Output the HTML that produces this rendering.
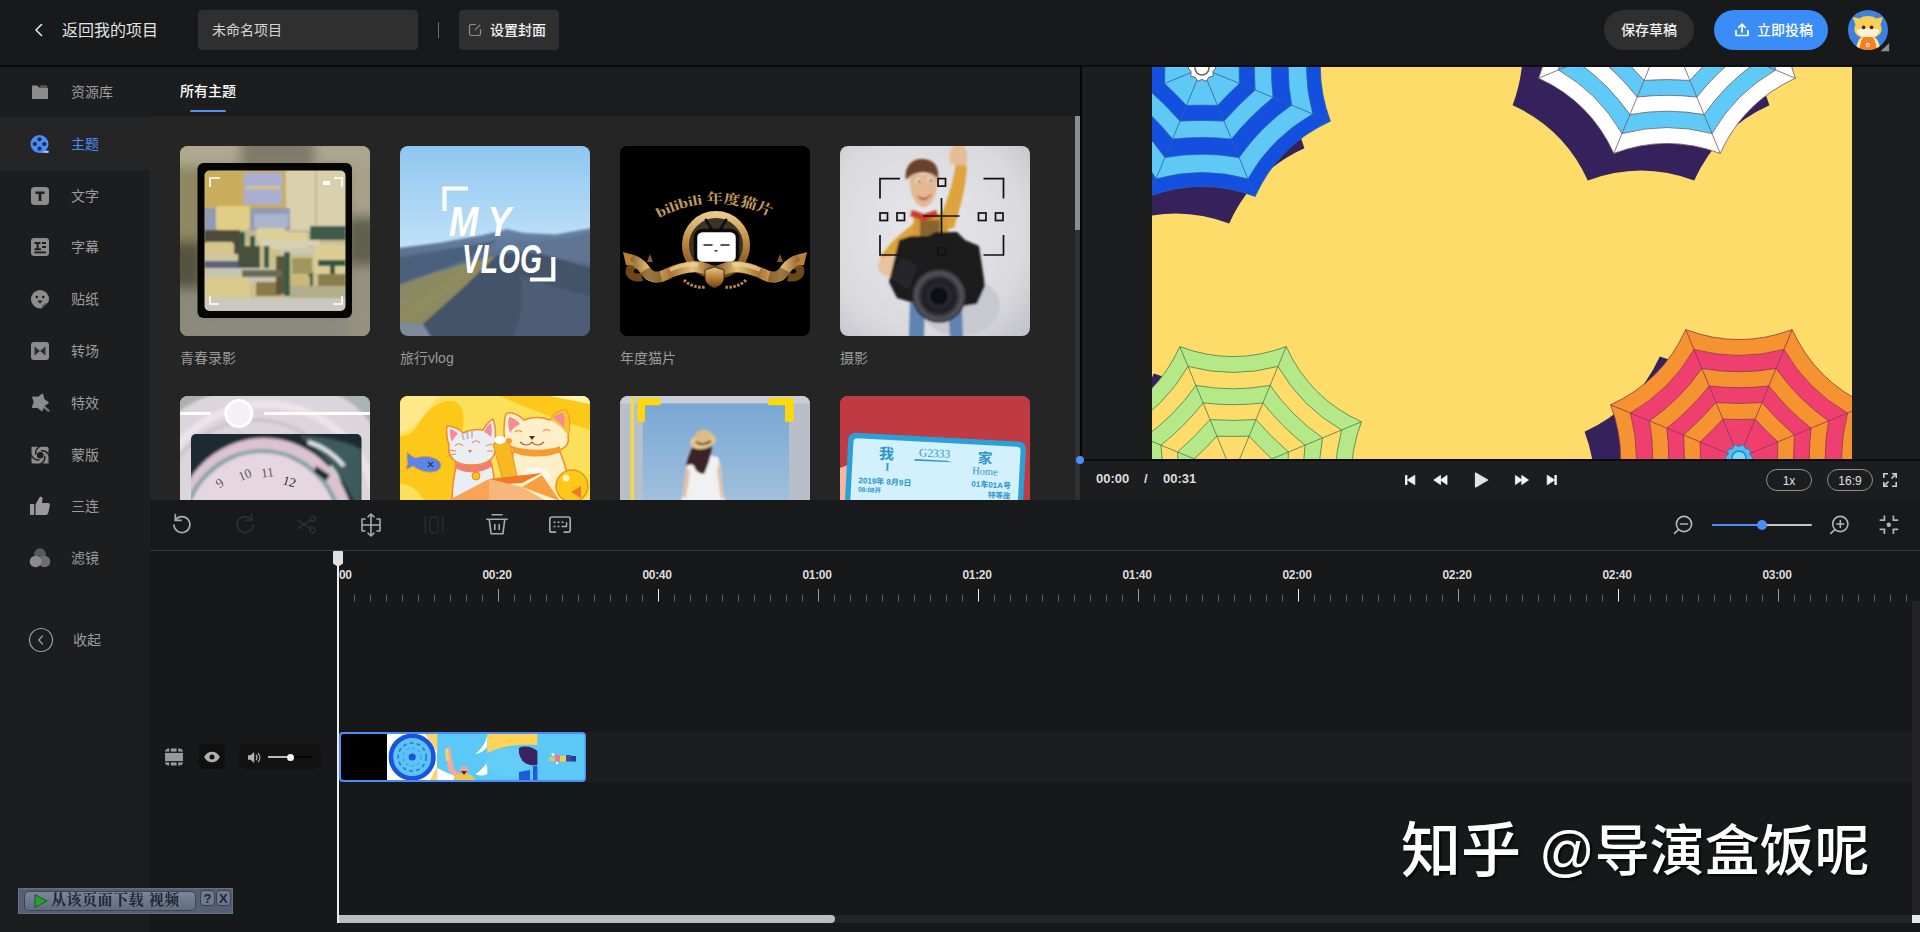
<!DOCTYPE html>
<html lang="zh-CN">
<head>
<meta charset="utf-8">
<title>视频编辑器</title>
<style>
*{box-sizing:border-box;margin:0;padding:0}
html,body{width:1920px;height:932px;overflow:hidden;background:#17181a}
body{position:relative;font-family:"Liberation Sans","Noto Sans CJK SC",sans-serif;color:#e6e6e6;font-size:14px;-webkit-font-smoothing:antialiased}
.abs{position:absolute;display:block}
.t{position:absolute;white-space:nowrap;line-height:1}
#topbar{left:0;top:0;width:1920px;height:65px;background:#18191b}
#topline{left:0;top:65px;width:1920px;height:2px;background:#0a0a0b}
#sidebar{left:0;top:67px;width:150px;height:865px;background:#1c1d1f}
#tabhead{left:150px;top:67px;width:930px;height:49px;background:#1c1d1f}
#content{left:150px;top:116px;width:930px;height:384px;background:#252525;overflow:hidden}
#activeitem{left:0;top:118px;width:150px;height:52px;background:#252525}
.nav{left:71px;font-size:14px;color:#9c9c9c}
.thumb{position:absolute;width:190px;height:190px;border-radius:8px;overflow:hidden}
.lbl{font-size:14px;color:#9a9a9a}
#preview{left:1082px;top:67px;width:839px;height:393px;background:#1c1d1f}
#pvline{left:1080px;top:66px;width:2px;height:394px;background:#060607}
#ctrl{left:1080px;top:461px;width:840px;height:39px;background:#1c1d1f}
#toolbar{left:150px;top:500px;width:1770px;height:50px;background:#18191b}
#tl{left:150px;top:551px;width:1770px;height:381px;background:#17181a}
#tlline{left:150px;top:550px;width:1770px;height:1px;background:#3a3a3c}
.rl{font-size:12px;font-weight:bold;color:#dcdcdc;top:569px;width:60px;text-align:center;letter-spacing:-.3px}
</style>
</head>
<body>

<!-- ===== top bar ===== -->
<div id="topbar" class="abs"></div>
<div id="topline" class="abs"></div>
<svg class="abs" style="left:32px;top:22px" width="14" height="16" viewBox="0 0 14 16"><path d="M9.5 2.5L4 8l5.5 5.5" fill="none" stroke="#e6e6e6" stroke-width="1.6" stroke-linecap="round" stroke-linejoin="round"/></svg>
<div class="t" style="left:62px;top:23px;font-size:16px;color:#e2e2e2">返回我的项目</div>
<div class="abs" style="left:198px;top:10px;width:220px;height:40px;border-radius:4px;background:#2f2f30"></div>
<div class="t" style="left:212px;top:23px;font-size:14px;color:#d4d4d4">未命名项目</div>
<div class="abs" style="left:438px;top:22px;width:1px;height:16px;background:#6a6a6a"></div>
<div class="abs" style="left:459px;top:10px;width:100px;height:40px;border-radius:4px;background:#2f2f30"></div>
<svg class="abs" style="left:468px;top:23px" width="14" height="14" viewBox="0 0 14 14"><path d="M7.5 1.5H3.2A1.7 1.7 0 0 0 1.5 3.2v7.6a1.7 1.7 0 0 0 1.7 1.7h7.6a1.7 1.7 0 0 0 1.7-1.7V6.5" fill="none" stroke="#8e8e8e" stroke-width="1.2" stroke-linecap="round"/><path d="M7.2 6.8L11.8 2.2" stroke="#8e8e8e" stroke-width="1.2" stroke-linecap="round"/></svg>
<div class="t" style="left:490px;top:23px;font-size:14px;font-weight:500;color:#f2f2f2">设置封面</div>

<div class="abs" style="left:1604px;top:10px;width:90px;height:40px;border-radius:20px;background:#2f2f30"></div>
<div class="t" style="left:1621px;top:23px;font-size:14px;font-weight:500;color:#f2f2f2">保存草稿</div>
<div class="abs" style="left:1714px;top:10px;width:114px;height:40px;border-radius:20px;background:#3a8cf6"></div>
<svg class="abs" style="left:1734px;top:22px" width="16" height="16" viewBox="0 0 16 16"><path d="M2 8.5v4.3c0 .4.3.7.7.7h10.6c.4 0 .7-.3.7-.7V8.5" fill="none" stroke="#fff" stroke-width="1.7" stroke-linecap="round"/><path d="M8 10V2.3M4.8 5.3L8 2.1l3.2 3.2" fill="none" stroke="#fff" stroke-width="1.7" stroke-linecap="round" stroke-linejoin="round"/></svg>
<div class="t" style="left:1757px;top:23px;font-size:14px;font-weight:500;color:#fff">立即投稿</div>
<!-- avatar -->
<svg class="abs" style="left:1848px;top:9.700px" width="42" height="42" viewBox="0 0 42 42">
<defs><clipPath id="avc"><circle cx="20" cy="20" r="20"/></clipPath><filter id="avb"><feGaussianBlur stdDeviation=".5"/></filter></defs>
<circle cx="20" cy="20" r="20" fill="#3b82e0"/>
<g clip-path="url(#avc)"><g filter="url(#avb)">
<path d="M4.500 7l7 1.500c3-2 6-2.600 8.500-2.600s5.500.6 8.500 2.600l6.500-1.500-2.500 7.500c1 2 1.200 4 1 6-1 5-6 7.500-13.500 7.500S7.500 25.500 6.500 20.500c-.2-2 0-4 1-6z" fill="#f8d055"/>
<path d="M8.700 20c3-1.200 7-1.800 11.300-1.800s8.300.6 11.300 1.800c-.5 4.800-5 7.300-11.300 7.300S9.200 24.800 8.700 20z" fill="#fdf1da"/>
<circle cx="15.600" cy="17.400" r="1.800" fill="#4a1f1a"/><circle cx="23.600" cy="17.400" r="1.800" fill="#4a1f1a"/>
<path d="M8 42c0-8 3-14 6-15h12c3 1 6.400 7 6.400 15z" fill="#fbe39a"/>
<path d="M11.500 42c0-7 2-13 4-15h9c2 2 4 8 4 15z" fill="#f57f20"/>
<circle cx="19.800" cy="35" r="2.200" fill="#fbd9a8"/><circle cx="19.800" cy="35.300" r=".9" fill="#f57f20"/>
</g></g>
<path d="M41.200 33v8.200H32.500z" fill="#8c8c92"/>
</svg>

<!-- ===== sidebar ===== -->
<div id="sidebar" class="abs"></div>
<div id="tabhead" class="abs"></div>
<div id="activeitem" class="abs"></div>
<!-- folder -->
<svg class="abs" style="left:30px;top:82px" width="20" height="20" viewBox="0 0 20 20"><path d="M2 3.5h5.2l1.8 2H17a1 1 0 0 1 1 1V16a1 1 0 0 1-1 1H3a1 1 0 0 1-1-1z" fill="#8c8c8c"/><path d="M9.5 3.6h7.5v1.2H10.6z" fill="#6e6e6e"/></svg>
<div class="t nav" style="top:85px">资源库</div>
<!-- film reel (active) -->
<svg class="abs" style="left:29px;top:133px" width="22" height="22" viewBox="0 0 22 22"><circle cx="10.5" cy="11" r="9" fill="#4a8df8"/><circle cx="10.5" cy="6.3" r="2.1" fill="#1d2a44"/><circle cx="10.5" cy="15.7" r="2.1" fill="#1d2a44"/><circle cx="5.8" cy="11" r="2.1" fill="#1d2a44"/><circle cx="15.2" cy="11" r="2.1" fill="#1d2a44"/><rect x="10.5" y="17.6" width="9.5" height="2.4" rx="1.2" fill="#4a8df8"/><rect x="14.5" y="18.2" width="5" height="1.2" rx=".6" fill="#dfe9ff"/></svg>
<div class="t nav" style="top:137px;color:#4a8df8">主题</div>
<!-- text T -->
<svg class="abs" style="left:30px;top:186px" width="20" height="20" viewBox="0 0 20 20"><rect x="1" y="1" width="18" height="18" rx="3.5" fill="#8c8c8c"/><path d="M5.5 5.5h9v2.6h-3.1V15H8.6V8.1H5.5z" fill="#1c1d1f"/></svg>
<div class="t nav" style="top:189px">文字</div>
<!-- subtitle -->
<svg class="abs" style="left:30px;top:237px" width="20" height="20" viewBox="0 0 20 20"><rect x="1" y="1" width="18" height="18" rx="3" fill="#8c8c8c"/><path d="M4.5 5h6v2H8.6v4.2h2.4v2H4.5v-2h2.1V7H4.500z" fill="#1c1d1f"/><rect x="12" y="5" width="4" height="2" fill="#1c1d1f"/><rect x="12" y="9" width="4" height="2" fill="#1c1d1f"/><rect x="4.500" y="14.500" width="11.500" height="1.800" fill="#1c1d1f"/></svg>
<div class="t nav" style="top:240px">字幕</div>
<!-- sticker -->
<svg class="abs" style="left:30px;top:289px" width="20" height="20" viewBox="0 0 20 20"><path d="M10 1a9 9 0 0 1 9 9c0 1.500-.5 2.800-1.200 3.800L11.500 19.500C6 20 1 15.500 1 10a9 9 0 0 1 9-9z" fill="#8c8c8c"/><path d="M11.300 19.300c.3-3.200 2.800-5.400 6.400-5.600z" fill="#5a5a5a"/><circle cx="6.800" cy="8" r="1.300" fill="#1c1d1f"/><circle cx="13.200" cy="8" r="1.300" fill="#1c1d1f"/><path d="M7.500 11.500h5l-2.500 3.200z" fill="#1c1d1f"/></svg>
<div class="t nav" style="top:292px">贴纸</div>
<!-- transition -->
<svg class="abs" style="left:30px;top:341px" width="20" height="20" viewBox="0 0 20 20"><rect x="1" y="1" width="18" height="18" rx="3" fill="#8c8c8c"/><path d="M4.500 5.500L10 10l-5.500 4.500zM15.500 5.500L10 10l5.500 4.500z" fill="#2c2c2e"/></svg>
<div class="t nav" style="top:344px">转场</div>
<!-- effects star -->
<svg class="abs" style="left:30px;top:393px" width="22" height="22" viewBox="0 0 22 22"><path d="M13 13l5.400 4.600" stroke="#777" stroke-width="2.400" stroke-linecap="round"/><polygon points="12.5,1.5 13.7,6.6 18.0,9.7 13.5,12.5 11.9,17.5 7.9,14.1 2.6,14.1 4.6,9.2 3.0,4.2 8.2,4.6" fill="#8c8c8c" stroke="#8c8c8c" stroke-width="1.600" stroke-linejoin="round"/></svg>
<div class="t nav" style="top:396px">特效</div>
<!-- mask swirl -->
<svg class="abs" style="left:30px;top:445px" width="20" height="20" viewBox="0 0 20 20"><path d="M1.500 1.800h15.500a1.500 1.500 0 0 1 1.500 1.500v15.200H3a1.500 1.500 0 0 1-1.500-1.500z" fill="#8c8c8c"/><circle cx="10.200" cy="10.300" r="3.300" fill="#1c1d1f"/><g fill="none" stroke="#1c1d1f" stroke-width="1.500" stroke-linecap="round"><path d="M10.500 1.200Q5.200 3.800 5.600 9"/><path d="M19.200 10.600Q16.600 5.300 11.400 5.700"/><path d="M9.900 19.400Q15.200 16.800 14.800 11.600"/><path d="M1.200 10Q3.800 15.300 9 14.900"/></g></svg>
<div class="t nav" style="top:448px">蒙版</div>
<!-- thumbs up -->
<svg class="abs" style="left:29px;top:495px" width="22" height="22" viewBox="0 0 22 22"><rect x="1" y="9" width="4.200" height="11" rx="1" fill="#9a9a9a"/><path d="M6.500 9.500L11 1.500c1.800 0 2.800 1.200 2.500 2.900L12.900 8H19c1.300 0 2.200 1.200 1.900 2.500l-1.700 7.600c-.3 1.100-1.200 1.900-2.400 1.900H6.500z" fill="#9a9a9a"/></svg>
<div class="t nav" style="top:499px">三连</div>
<!-- filter circles -->
<svg class="abs" style="left:28px;top:547px" width="24" height="22" viewBox="0 0 24 22"><circle cx="12" cy="7" r="5.800" fill="#5a5a5a"/><circle cx="16.500" cy="14.500" r="5.800" fill="#6e6e6e"/><circle cx="7.500" cy="14.500" r="5.800" fill="#8c8c8c"/></svg>
<div class="t nav" style="top:551px">滤镜</div>
<!-- collapse -->
<svg class="abs" style="left:28px;top:627px" width="26" height="26" viewBox="0 0 26 26"><circle cx="13" cy="13" r="11.500" fill="none" stroke="#9c9c9c" stroke-width="1.200"/><path d="M14.500 9L10.800 13l3.700 4" fill="none" stroke="#9c9c9c" stroke-width="1.300" stroke-linecap="round" stroke-linejoin="round"/></svg>
<div class="t nav" style="left:73px;top:633px">收起</div>
<!-- tab header -->
<div class="t" style="left:180px;top:84px;font-size:14px;font-weight:500;color:#fff">所有主题</div>
<div class="abs" style="left:190px;top:110px;width:36px;height:2px;background:#5a8ff0;border-radius:1px"></div>

<!-- ===== content / thumbnails ===== -->
<div id="content" class="abs">
<!-- thumb 1 : classroom -->
<div class="thumb" style="left:30px;top:30px;background:#9a9273">
<svg width="190" height="190" viewBox="0 0 190 190">
<defs><filter id="b1" x="-20%" y="-20%" width="140%" height="140%"><feGaussianBlur stdDeviation="6"/></filter>
<filter id="b1s" x="-20%" y="-20%" width="140%" height="140%"><feGaussianBlur stdDeviation="1.2"/></filter>
<clipPath id="c1"><rect x="24.5" y="24.5" width="141" height="140.5" rx="5"/></clipPath></defs>
<rect width="190" height="190" fill="#8a846c"/>
<g filter="url(#b1)">
<rect x="-10" y="-10" width="75" height="30" fill="#b0a98f"/>
<rect x="60" y="-10" width="80" height="30" fill="#7f7a69"/>
<rect x="135" y="-10" width="65" height="30" fill="#ada68e"/>
<rect x="-10" y="20" width="30" height="75" fill="#8f8760"/>
<rect x="-10" y="95" width="32" height="48" fill="#55523f"/>
<rect x="-10" y="143" width="32" height="50" fill="#8c8a7a"/>
<rect x="15" y="168" width="165" height="30" fill="#8b8a7f"/>
<rect x="168" y="18" width="30" height="52" fill="#a8a188"/>
<rect x="168" y="70" width="30" height="50" fill="#615e4e"/>
<rect x="168" y="120" width="30" height="75" fill="#96927e"/>
</g>
<rect x="17.5" y="17" width="154.500" height="155" rx="6" fill="#050505"/>
<g clip-path="url(#c1)"><g filter="url(#b1s)">
<rect x="20" y="20" width="150" height="150" fill="#cbbf8c"/>
<rect x="24" y="24" width="82" height="52" fill="#c9ad5d"/>
<rect x="106" y="24" width="60" height="70" fill="#d9d1ae"/>
<rect x="135" y="24" width="1.500" height="66" fill="#b9b08c"/>
<rect x="64" y="27" width="38" height="31" fill="#a9aed2"/>
<rect x="66" y="40" width="34" height="3" fill="#d9c66a"/>
<rect x="24" y="62" width="86" height="24" fill="#8f9bb2"/>
<rect x="36" y="60" width="34" height="24" rx="3" fill="#e0cd86"/>
<rect x="74" y="68" width="34" height="14" fill="#aab4cc"/>
<rect x="24" y="84" width="142" height="12" fill="#bfb791"/>
<rect x="24" y="84" width="36" height="30" fill="#4d4a3c"/>
<rect x="130" y="80" width="36" height="14" fill="#3d5a4c"/>
<rect x="76" y="82" width="30" height="14" rx="4" fill="#dccf9a"/>
<rect x="90" y="86" width="38" height="18" rx="4" fill="#dccf9a"/>
<rect x="60" y="86" width="5" height="32" fill="#2f5a45"/>
<rect x="70" y="90" width="5" height="30" fill="#2f5a45"/>
<rect x="84" y="96" width="5" height="34" fill="#2f5a45"/>
<rect x="80" y="94" width="60" height="6" fill="#d6d0b6"/>
<rect x="100" y="102" width="40" height="6" fill="#c9c8ba"/>
<rect x="104" y="106" width="6" height="44" fill="#315c48"/>
<rect x="134" y="98" width="32" height="30" rx="5" fill="#d9cc94"/>
<rect x="138" y="114" width="28" height="6" fill="#2d5442"/>
<rect x="150" y="118" width="5" height="46" fill="#2d5442"/>
<rect x="128" y="126" width="5" height="36" fill="#2d5442"/>
<rect x="24" y="96" width="30" height="14" rx="3" fill="#d4c68c"/>
<rect x="24" y="108" width="38" height="10" fill="#cfc6a0"/>
<rect x="24" y="115" width="34" height="8" fill="#59617a"/>
<rect x="24" y="122" width="70" height="16" fill="#c6c5b4"/>
<rect x="24" y="130" width="46" height="26" rx="6" fill="#d8c98d"/>
<rect x="76" y="136" width="26" height="14" fill="#8c7a4a"/>
<rect x="110" y="130" width="20" height="20" fill="#c9b878"/>
<rect x="58" y="100" width="22" height="22" fill="#46503e"/>
<rect x="96" y="110" width="9" height="38" fill="#5d553a"/>
<rect x="112" y="112" width="20" height="16" fill="#a3955f"/>
<rect x="62" y="124" width="40" height="7" fill="#6b6b58"/>
<rect x="138" y="128" width="28" height="20" fill="#8a7d4e"/>
<rect x="24" y="152" width="142" height="14" fill="#c9c9c0"/>
<rect x="110" y="140" width="56" height="12" fill="#b3ad8c"/>
</g>
<path d="M30 41v-9h10M154 32h8v9M30 150v8h9M162 150v8h-9" fill="none" stroke="#fff" stroke-width="1.600"/>
<rect x="143" y="35" width="7" height="4" fill="#fff"/>
</g>
</svg></div>
<div class="t lbl" style="left:30px;top:235px">青春录影</div>

<!-- thumb 2 : vlog -->
<div class="thumb" style="left:250px;top:30px">
<svg width="190" height="190" viewBox="0 0 190 190">
<defs><linearGradient id="sky" x1="0" y1="0" x2="0" y2="1"><stop offset="0" stop-color="#8fc6f0"/><stop offset="1" stop-color="#c3e3f8"/></linearGradient>
<linearGradient id="mt" x1="0" y1="0" x2="0" y2="1"><stop offset="0" stop-color="#6a84a6"/><stop offset=".35" stop-color="#55698a"/><stop offset="1" stop-color="#45556b"/></linearGradient>
<linearGradient id="lit" x1="0" y1="0" x2="1" y2="1"><stop offset="0" stop-color="#7d8670"/><stop offset=".5" stop-color="#8f8c5e"/><stop offset="1" stop-color="#7a7a5c"/></linearGradient>
<filter id="b2"><feGaussianBlur stdDeviation=".9"/></filter></defs>
<rect width="190" height="108" fill="url(#sky)"/>
<g filter="url(#b2)">
<path d="M-2 102L38 97 81 89.500 100 85l6.700-2 8.300 2 9 2 32 1.400L192 82V192H-2z" fill="url(#mt)"/>
<path d="M-2 112c20-4 45-8 70-12l30-6c-10 8-24 14-34 20-22 8-44 16-66 26z" fill="#4b607d"/>
<path d="M110 96c14 0 30 0 46-2 12-2 24-6 36-8v30c-20 0-50-4-82-20z" fill="#5f7592"/>
<path d="M-2 139L30 128l36-11 30-7c-6 6-12 12-18 17-8 8-16 16-24 24-10 9-20 18-30 27l-26-2z" fill="url(#lit)"/>
<path d="M-2 176l25 2 9 14H-2z" fill="#7d8b9b"/>
<path d="M96 110c14-4 30-4 44-2 18 4 36 10 52 14v70H32l-9-14c10-9 20-18 30-27 16-14 30-28 43-41z" fill="#43536a"/>
<path d="M120 130c20 6 44 14 72 20v42h-80c10-20 12-40 8-62z" fill="#4d5d74"/>
</g>
<path d="M44.500 65V42.500H68" fill="none" stroke="#fff" stroke-width="4.200"/>
<path d="M130 133.500h23.300V111" fill="none" stroke="#fff" stroke-width="4.200"/>
<text x="49" y="89.500" font-family="Liberation Sans,sans-serif" font-style="italic" font-weight="bold" font-size="43" fill="#fff" textLength="62" lengthAdjust="spacingAndGlyphs">M Y</text>
<text x="62" y="126.500" font-family="Liberation Sans,sans-serif" font-style="italic" font-weight="bold" font-size="41" fill="#fff" textLength="80" lengthAdjust="spacingAndGlyphs">VLOG</text>
</svg></div>
<div class="t lbl" style="left:250px;top:235px">旅行vlog</div>

<!-- thumb 3 : bilibili cat -->
<div class="thumb" style="left:470px;top:30px;background:#000">
<svg width="190" height="190" viewBox="0 0 190 190">
<defs><linearGradient id="gold" x1="0" y1="0" x2="0" y2="1"><stop offset="0" stop-color="#e9c88a"/><stop offset=".5" stop-color="#b9803a"/><stop offset="1" stop-color="#6e4618"/></linearGradient>
<linearGradient id="gold2" x1="0" y1="0" x2="1" y2="0"><stop offset="0" stop-color="#7a4e1c"/><stop offset=".25" stop-color="#e6c27c"/><stop offset=".5" stop-color="#a8742f"/><stop offset=".75" stop-color="#e6c27c"/><stop offset="1" stop-color="#7a4e1c"/></linearGradient>
<path id="arc3" d="M39 72Q96 42 155 73"/></defs>
<rect width="190" height="190" fill="#000"/>
<text font-family="Liberation Serif,Noto Serif CJK SC,serif" font-weight="bold" font-size="14" fill="#c09a5e"><textPath href="#arc3" textLength="116" lengthAdjust="spacingAndGlyphs">bilibili 年度猫片</textPath></text>
<circle cx="96" cy="99" r="30.500" fill="#3a3326" stroke="url(#gold)" stroke-width="7"/>
<path d="M86 74l6 10M106 74l-6 10" stroke="#111" stroke-width="3" stroke-linecap="round"/>
<rect x="75.500" y="84.500" width="42" height="33" rx="7" fill="#fff" stroke="#0a0a0a" stroke-width="3.500"/>
<path d="M84 99h8M101 99h8" stroke="#222" stroke-width="1.600" stroke-linecap="round"/><rect x="94.500" y="104" width="3" height="1.500" fill="#333"/>
<g fill="none" stroke-linecap="butt">
<path d="M22 131c-8 2-14-2-12-8 2-5 10-5 16-1" stroke="#6e4618" stroke-width="8"/>
<path d="M168 131c8 2 14-2 12-8-2-5-10-5-16-1" stroke="#6e4618" stroke-width="8"/>
<path d="M7 113c8 1 14 5 18 11 4 7 12 9 20 5 10-5 22-9 34-8 6 1 11 3 16 6" stroke="url(#gold2)" stroke-width="11"/>
<path d="M183 113c-8 1-14 5-18 11-4 7-12 9-20 5-10-5-22-9-34-8-6 1-11 3-16 6" stroke="url(#gold2)" stroke-width="11"/>
<path d="M25 124c3 5 9 8 16 6" stroke="#5f3b12" stroke-width="11" opacity=".55"/>
<path d="M165 124c-3 5-9 8-16 6" stroke="#5f3b12" stroke-width="11" opacity=".55"/>
<path d="M50 124c8-4 18-6 28-5" stroke="#f0d49a" stroke-width="4" opacity=".7"/>
<path d="M140 124c-8-4-18-6-28-5" stroke="#f0d49a" stroke-width="4" opacity=".7"/>
</g>
<path d="M3 106l10 3-3 5 6 5-10 0z" fill="#b9803a"/><path d="M187 106l-10 3 3 5-6 5 10 0z" fill="#b9803a"/>
<path d="M30 108l3 8h-6zM160 108l3 8h-6z" fill="#8a5a20"/>
<path d="M85 124l9.500-3 9.500 3v8c0 5-4 8-9.500 10-5.500-2-9.500-5-9.500-10z" fill="url(#gold)" stroke="#2a1a08" stroke-width=".8"/>
<path d="M64 134c6 6 14 8 22 7M126 134c-6 6-14 8-22 7" stroke="#b98a44" stroke-width="3" fill="none" stroke-dasharray="2.500 1.500"/>
</svg></div>
<div class="t lbl" style="left:470px;top:235px">年度猫片</div>

<!-- thumb 4 : woody camera -->
<div class="thumb" style="left:690px;top:30px">
<svg width="190" height="190" viewBox="0 0 190 190">
<defs><radialGradient id="bg4" cx=".45" cy=".45" r=".75"><stop offset="0" stop-color="#e8e8ec"/><stop offset=".7" stop-color="#dadade"/><stop offset="1" stop-color="#c2c2ca"/></radialGradient>
<filter id="b4"><feGaussianBlur stdDeviation="1"/></filter>
<radialGradient id="lens" cx=".5" cy=".5" r=".5"><stop offset="0" stop-color="#15151a"/><stop offset=".35" stop-color="#2c2c33"/><stop offset=".6" stop-color="#1d1d22"/><stop offset=".85" stop-color="#55555c"/><stop offset="1" stop-color="#2a2a30"/></radialGradient></defs>
<rect width="190" height="190" fill="url(#bg4)"/>
<g filter="url(#b4)">
<ellipse cx="120" cy="160" rx="40" ry="30" fill="#c8c8d0"/>
<!-- legs -->
<path d="M70 152l15 4-1 36H69z" fill="#5f84b4"/><path d="M108 160l14 0 1 32h-13z" fill="#5f84b4"/>
<!-- raised arm -->
<path d="M100 84l14-2c6-20 12-40 13-62l-11-3c-3 20-9 40-18 58z" fill="#dfa33a"/>
<path d="M110 18c-2-8 0-16 6-20l8 2c4 6 4 14 2 20z" fill="#e6bd98"/>
<!-- left arm -->
<path d="M76 76l10 10c-12 10-26 20-34 32l-12-6c8-14 22-26 36-36z" fill="#dfa33a"/>
<ellipse cx="52" cy="120" rx="14" ry="11" fill="#e8c49e"/>
<!-- torso -->
<path d="M74 68h32l4 30H72z" fill="#d49a35"/>
<path d="M80 74h20v20H80z" fill="#4a3a2a" opacity=".55"/>
<!-- head -->
<path d="M69.500 28c0 20 4 31 14 33 10-1 14-13 14-33z" fill="#e4b793"/>
<path d="M66 34c-2-14 6-21 16-21 10 0 18 6 16 20-6-8-22-10-32 1z" fill="#6b4229"/>
<ellipse cx="78.500" cy="35" rx="2.300" ry="2.800" fill="#f4efe8"/><ellipse cx="90" cy="34" rx="2.300" ry="2.800" fill="#f4efe8"/><circle cx="79" cy="35.500" r="1.300" fill="#2a1a10"/><circle cx="90.500" cy="34.500" r="1.300" fill="#2a1a10"/>
<path d="M78 50c4 4 10 3 13-2-3 6-10 8-13 2z" fill="#a03a30" stroke="#a03a30"/>
<path d="M72 64l12 4 12-4 2 6-14 5-14-5z" fill="#cf3a2a"/>
<!-- camera --><g transform="translate(1 4)">
<path d="M58 90l12-4h18l6-4h22l8 8 14 6 6 40-8 18-40 6-40-12-8-16z" fill="#1b1b1f"/>
<path d="M50 128l10-20 16 6-8 26z" fill="#26262b"/>
<circle cx="98" cy="146" r="27" fill="url(#lens)"/>
<circle cx="98" cy="146" r="9" fill="#0e0e12"/></g>
</g>
<g fill="none" stroke="#111" stroke-width="1.700">
<path d="M40 52.600V32.600H60M143.500 32.600h20v20M40 89v20h20M143.500 109h20V89"/>
<rect x="40" y="67" width="7.500" height="7.500"/><rect x="57" y="67" width="7.500" height="7.500"/><rect x="138.500" y="67" width="7.500" height="7.500"/><rect x="155.500" y="67" width="7.500" height="7.500"/>
<rect x="98" y="32.600" width="7.500" height="7.500"/><rect x="98" y="101.500" width="7.500" height="7.500"/>
<path d="M101.500 52v38.500M83 70h36.500"/>
</g>
</svg></div>
<div class="t lbl" style="left:690px;top:235px">摄影</div>

<!-- thumb 5 : pocket watch -->
<div class="thumb" style="left:30px;top:280px">
<svg width="190" height="190" viewBox="0 0 190 190">
<defs><filter id="b5" x="-10%" y="-10%" width="120%" height="120%"><feGaussianBlur stdDeviation="1.500"/></filter>
<clipPath id="c5"><rect x="11" y="38" width="170.500" height="160" rx="5"/></clipPath></defs>
<rect width="190" height="190" fill="#dcd5dc"/>
<g filter="url(#b5)">
<path d="M-5 -5h50c-20 5-35 12-48 22z" fill="#aab0b0"/>
<path d="M150 -5h45v40c-8-16-22-30-45-40z" fill="#a9b4b3"/>
<ellipse cx="85" cy="120" rx="112" ry="112" fill="none" stroke="#ece4ea" stroke-width="8"/>
<ellipse cx="75" cy="130" rx="100" ry="106" fill="none" stroke="#c9c0c8" stroke-width="3"/>
</g>
<g clip-path="url(#c5)"><g filter="url(#b5)">
<rect x="5" y="32" width="185" height="165" fill="#1f2c30"/>
<path d="M120 40c20 0 45 4 62 14v70c-10-30-30-60-62-84z" fill="#3c5a5c"/>
<path d="M128 46c14 4 26 12 36 24" stroke="#dfe8e8" stroke-width="4" fill="none"/>
<path d="M150 70c10 10 14 26 8 44" stroke="#cfdada" stroke-width="3" fill="none"/>
<ellipse cx="84" cy="136" rx="90" ry="94" fill="#dcc3cf"/>
<ellipse cx="82" cy="139" rx="82" ry="86" fill="#7fa3a2"/>
<ellipse cx="82" cy="141" rx="78" ry="84" fill="#e6d6e0"/>
<path d="M136 70l14 9-4 6-12-9z" fill="#1a2020"/>
</g>
<g font-family="Liberation Serif,serif" fill="#5a5560" font-size="13">
<text x="36" y="91" transform="rotate(-35 40 86)">9</text>
<text x="58" y="83" transform="rotate(-22 65 78)">10</text>
<text x="81" y="81" transform="rotate(-8 87 76)">11</text>
<text x="103" y="90" transform="rotate(16 110 85)" fill="#2a2a30">12</text>
</g></g>
<rect x="0" y="16" width="31" height="3" fill="#fff"/><rect x="84" y="16" width="106" height="3" fill="#fff"/>
<circle cx="58.800" cy="17.600" r="13" fill="#f4f0f4" stroke="#fff" stroke-width="3"/>
</svg></div>

<!-- thumb 6 : lucky cats -->
<div class="thumb" style="left:250px;top:280px">
<svg width="190" height="190" viewBox="0 0 190 190">
<rect width="190" height="190" fill="#fde05a"/>
<path d="M0 40c14 0 16-10 24-20 8-10 20-18 32-14 10 6 8 20 6 34-2 20-10 40-8 64H0z" fill="#fdc81a"/>
<path d="M0 0h40c-10 8-16 22-26 30-4 4-10 6-14 6z" fill="#fee889"/>
<path d="M0 88c10 0 18 6 24 16H0z" fill="#fde05a"/>
<path d="M100 0h90v34c-30-10-60-20-90-34z" fill="#fdc81a"/>
<path d="M150 0h40v8z" fill="#fff3b0"/>
<!-- blue fish -->
<path d="M7 56c3 3 6 5 9 6 8-3 18-2 24 4 2 3 1 7-3 9-8 3-18 0-24-5-2 1-5 3-7 3 1-3 2-6 1-9z" fill="#5b86e8" stroke="#f0a030" stroke-width="1"/>
<path d="M28 66l5 5M33 66l-5 5" stroke="#2a3560" stroke-width="1.200"/>
<!-- cream cat -->
<path d="M113 56h47c6 14 10 30 12 50h-64z" fill="#fdf0c8" stroke="#f08a30" stroke-width="1.500"/>
<path d="M106 18c4 -3 12 0 18 6 8-3 18-3 26 0 4-6 10-10 16-10 4 8 4 18 2 26 2 10-4 16-28 17-24-1-36-6-36-20 0-8 0-14 2-19z" fill="#fdf0c8" stroke="#f08a30" stroke-width="1.500"/>
<path d="M150 24c4-6 10-10 16-10 4 8 4 18 2 26-4-8-10-12-18-16z" fill="#fbc436"/>
<path d="M109 21c3 0 8 3 11 7-4 2-8 5-10 9-2-6-2-12-1-16z" fill="#f58a98"/><path d="M153 22c3-3 7-5 10-5 2 5 2 10 1 15-3-4-7-8-11-10z" fill="#f58a98"/>
<path d="M115 36c2-2 5-2 7 0M143 35c2-2 5-2 7 0" stroke="#f08a30" stroke-width="1.200" fill="none"/>
<path d="M129 40h6l-3 4z" fill="#5a2a20"/><path d="M120 46c4 4 9 4 12 0 3 4 8 4 12 0" stroke="#c05a20" stroke-width="1.200" fill="none"/>
<path d="M112 50c14 5 36 5 48 0l1 6c-14 6-36 6-48 0z" fill="#f79a30"/>
<ellipse cx="136" cy="80" rx="14" ry="9" fill="#fff8e6"/>
<!-- grey cat -->
<path d="M56 70h36c2 10 4 22 4 36H52c0-14 2-26 4-36z" fill="#e9eef4" stroke="#f08a30" stroke-width="1.500"/>
<path d="M47 30c6 0 12 3 16 7 6-3 14-4 20-3 3-5 6-9 10-11 3 8 3 16 2 24 3 14-6 22-24 22-16 0-24-8-22-20-2-6-3-13-2-19z" fill="#e9eef4" stroke="#f08a30" stroke-width="1.500"/>
<path d="M49 33c3 0 7 2 9 5-3 2-5 5-6 8-2-4-2-9-2-13z" fill="#f58a98"/><path d="M84 36c2-4 4-7 7-9 1 5 1 10 0 14-2-2-4-4-7-5z" fill="#f58a98"/>
<path d="M62 38l2 6M67 36l1 7M72 35l0 7" stroke="#b8bcc6" stroke-width="1.800"/>
<path d="M55 50c2-3 6-3 8 0M72 47c2-3 6-3 8 0" stroke="#f08a30" stroke-width="1.200" fill="none"/>
<path d="M68 54h4l-2 3z" fill="#e06a50"/>
<path d="M49 54l7 1M49 59l7-1M86 50l6-2M87 55l6 0" stroke="#f08a30" stroke-width="1"/>
<path d="M55 66c10 5 26 5 36-2l2 6c-12 8-28 8-38 2z" fill="#f57e6e"/>
<circle cx="76" cy="80" r="4" fill="#fbc020" stroke="#e89010" stroke-width="1"/>
<!-- scroll -->
<path d="M93 48l16-4 8 36-14 4z" fill="#f8b820" stroke="#f08a30" stroke-width="1"/>
<ellipse cx="100" cy="44" rx="6" ry="4" fill="#fff"/><ellipse cx="109" cy="45" rx="3" ry="3" fill="#f79a30"/>
<!-- box -->
<path d="M47 105l42-22 0 30H47z" fill="#f8a355"/>
<path d="M89 83l53-6-20 10-33 2z" fill="#f07a28"/>
<path d="M89 83l33 8 38 22H89z" fill="#f9b67a"/>
<path d="M122 91l20-12 18 26z" fill="#f8a040"/>
<!-- gold ball -->
<circle cx="172" cy="90" r="16" fill="#fdc81a" stroke="#e89a10" stroke-width="1.500"/><circle cx="166" cy="82" r="3.500" fill="#fff3b0"/>
<path d="M171 96l10-6v12z" fill="#f07a28"/>
</svg></div>

<!-- thumb 7 : girl -->
<div class="thumb" style="left:470px;top:280px">
<svg width="190" height="190" viewBox="0 0 190 190">
<defs><linearGradient id="sky7" x1="0" y1="0" x2="0" y2="1"><stop offset="0" stop-color="#79a8d4"/><stop offset=".55" stop-color="#a3c1dd"/><stop offset="1" stop-color="#b5cde2"/></linearGradient>
<filter id="b7"><feGaussianBlur stdDeviation=".8"/></filter></defs>
<rect width="190" height="190" fill="#b8bfcb"/>
<rect width="190" height="7.500" fill="#c9ced8"/>
<rect x="22.800" y="7.500" width="146.200" height="190" fill="url(#sky7)"/>
<rect x="10.500" y="0" width="3.500" height="190" fill="#efd94c"/>
<path d="M17.500 1.700h23v7.600H25v16.500h-7.500z" fill="#fdd80f"/>
<path d="M173.800 1.700h-25.400v7.600H165v16.500h8.800z" fill="#fdd80f"/>
<g filter="url(#b7)">
<path d="M68 66c6-5 18-8 30-5 3 8 4 18 4 28l4 20H60l6-24c0-8 0-14 2-19z" fill="#f1f1f1"/>
<path d="M66 70l-4 30 4 2 4-26zM100 66l4 36-3 2-4-30z" fill="#e0bfa8"/>
<path d="M76 44c-4 8-8 16-10 26 4-2 6-2 8 0 2 6 6 8 10 8 4-8 8-20 8-32z" fill="#3a2427"/>
<ellipse cx="83" cy="45" rx="13" ry="8" fill="#e3c690" transform="rotate(-12 83 45)"/>
<ellipse cx="83" cy="40" rx="8" ry="6.500" fill="#ddbb82" transform="rotate(-12 83 40)"/>
<path d="M76 46c4 3 10 3 15-1" stroke="#2a1a1c" stroke-width="2" fill="none"/>
</g>
</svg></div>

<!-- thumb 8 : ticket -->
<div class="thumb" style="left:690px;top:280px;background:#c03a44">
<svg width="190" height="190" viewBox="0 0 190 190">
<rect width="190" height="190" fill="#c03a44"/>
<path d="M0 72l8-3v40H0z" fill="#f2b8a0"/>
<g transform="rotate(3.040 8.600 36.500)">
<rect x="8.600" y="36.500" width="178" height="110" rx="7" fill="#2a9fd8"/>
<rect x="13.900" y="41.800" width="167.400" height="100" rx="4" fill="#d2f1fc"/>
<g fill="#2e96cb">
<text x="40" y="61" font-family="Liberation Sans,Noto Sans CJK SC,sans-serif" font-weight="bold" font-size="15">我</text>
<text x="80" y="56.500" font-family="Liberation Serif,serif" font-size="11.500">G2333</text>
<path d="M76 59.500h32l6 1.200-38 .4z"/>
<text x="139" y="60" font-family="Liberation Sans,Noto Sans CJK SC,sans-serif" font-weight="bold" font-size="14.500">家</text>
<text x="47" y="72.500" font-family="Liberation Serif,serif" font-weight="bold" font-size="11">I</text>
<text x="134" y="71.500" font-family="Liberation Serif,serif" font-size="10.500">Home</text>
<text x="21" y="86.500" font-family="Liberation Sans,Noto Sans CJK SC,sans-serif" font-weight="bold" font-size="8">2019年 8月9日</text>
<text x="21" y="95" font-family="Liberation Sans,Noto Sans CJK SC,sans-serif" font-weight="bold" font-size="6.500">08:08开</text>
<text x="134" y="84" font-family="Liberation Sans,Noto Sans CJK SC,sans-serif" font-weight="bold" font-size="8">01车01A号</text>
<text x="151" y="94" font-family="Liberation Sans,Noto Sans CJK SC,sans-serif" font-weight="bold" font-size="7.500">特等座</text>
</g></g>
</svg></div>
<!-- content scrollbar -->
<div class="abs" style="left:925px;top:0;width:5px;height:384px;background:#303030"></div>
<div class="abs" style="left:925px;top:0;width:5px;height:114px;background:#8e8e8e;border-radius:0"></div>
</div>

<!-- ===== preview ===== -->
<div id="preview" class="abs"></div>
<div id="pvline" class="abs"></div>
<div class="abs" style="left:1081px;top:66px;width:839px;height:1px;background:#101011"></div>
<svg class="abs" style="left:1152px;top:67px" width="700" height="392" viewBox="1152 67 700 392"><rect x="1152" y="67" width="700" height="392" fill="#fddc6a"/><path d="M1304.4 148.2Q1252.7 171.7 1229.2 223.4Q1176.0 203.4 1122.8 223.4Q1099.3 171.7 1047.6 148.2Q1067.6 95.0 1047.6 41.8Q1099.3 18.3 1122.8 -33.4Q1176.0 -13.4 1229.2 -33.4Q1252.7 18.3 1304.4 41.8Q1284.4 95.0 1304.4 148.2Z" fill="#35215c"/>
<path d="M1330.4 121.2Q1278.7 144.7 1255.2 196.4Q1202.0 176.4 1148.8 196.4Q1125.3 144.7 1073.6 121.2Q1093.6 68.0 1073.6 14.8Q1125.3 -8.7 1148.8 -60.4Q1202.0 -40.4 1255.2 -60.4Q1278.7 -8.7 1330.4 14.8Q1310.4 68.0 1330.4 121.2Z" fill="#1450e0" stroke="#2a5fb0" stroke-width="0.8"/>
<path d="M1312.9 113.9Q1271.3 137.3 1247.9 178.9Q1202.0 166.0 1156.1 178.9Q1132.7 137.3 1091.1 113.9Q1104.0 68.0 1091.1 22.1Q1132.7 -1.3 1156.1 -42.9Q1202.0 -30.0 1247.9 -42.9Q1271.3 -1.3 1312.9 22.1Q1300.0 68.0 1312.9 113.9Z" fill="#5fc8f5" stroke="#2a5fb0" stroke-width="0.8"/>
<path d="M1291.6 105.1Q1260.6 126.6 1239.1 157.6Q1202.0 150.8 1164.9 157.6Q1143.4 126.6 1112.4 105.1Q1119.2 68.0 1112.4 30.9Q1143.4 9.4 1164.9 -21.6Q1202.0 -14.8 1239.1 -21.6Q1260.6 9.4 1291.6 30.9Q1284.8 68.0 1291.6 105.1Z" fill="#1450e0" stroke="#2a5fb0" stroke-width="0.8"/>
<path d="M1273.1 97.5Q1249.9 115.9 1231.5 139.1Q1202.0 135.7 1172.5 139.1Q1154.1 115.9 1130.9 97.5Q1134.3 68.0 1130.9 38.5Q1154.1 20.1 1172.5 -3.1Q1202.0 0.3 1231.5 -3.1Q1249.9 20.1 1273.1 38.5Q1269.7 68.0 1273.1 97.5Z" fill="#5fc8f5" stroke="#2a5fb0" stroke-width="0.8"/>
<path d="M1255.1 90.0Q1238.6 104.6 1224.0 121.1Q1202.0 119.7 1180.0 121.1Q1165.4 104.6 1148.9 90.0Q1150.3 68.0 1148.9 46.0Q1165.4 31.4 1180.0 14.9Q1202.0 16.3 1224.0 14.9Q1238.6 31.4 1255.1 46.0Q1253.7 68.0 1255.1 90.0Z" fill="#1450e0" stroke="#2a5fb0" stroke-width="0.8"/>
<path d="M1239.4 83.5Q1228.1 94.1 1217.5 105.4Q1202.0 104.9 1186.5 105.4Q1175.9 94.1 1164.6 83.5Q1165.1 68.0 1164.6 52.5Q1175.9 41.9 1186.5 30.6Q1202.0 31.1 1217.5 30.6Q1228.1 41.9 1239.4 52.5Q1238.9 68.0 1239.4 83.5Z" fill="#5fc8f5" stroke="#2a5fb0" stroke-width="0.8"/>
<line x1="1202.0" y1="68.0" x2="1330.4" y2="121.2" stroke="#2a5fb0" stroke-width="0.8"/>
<line x1="1202.0" y1="68.0" x2="1255.2" y2="196.4" stroke="#2a5fb0" stroke-width="0.8"/>
<line x1="1202.0" y1="68.0" x2="1148.8" y2="196.4" stroke="#2a5fb0" stroke-width="0.8"/>
<line x1="1202.0" y1="68.0" x2="1073.6" y2="121.2" stroke="#2a5fb0" stroke-width="0.8"/>
<line x1="1202.0" y1="68.0" x2="1073.6" y2="14.8" stroke="#2a5fb0" stroke-width="0.8"/>
<line x1="1202.0" y1="68.0" x2="1148.8" y2="-60.4" stroke="#2a5fb0" stroke-width="0.8"/>
<line x1="1202.0" y1="68.0" x2="1255.2" y2="-60.4" stroke="#2a5fb0" stroke-width="0.8"/>
<line x1="1202.0" y1="68.0" x2="1330.4" y2="14.8" stroke="#2a5fb0" stroke-width="0.8"/>
<polygon points="1216.0,68.0 1212.9,71.5 1213.3,76.2 1208.7,77.3 1206.3,81.3 1202.0,79.5 1197.7,81.3 1195.3,77.3 1190.7,76.2 1191.1,71.5 1188.0,68.0 1191.1,64.5 1190.7,59.8 1195.3,58.7 1197.7,54.7 1202.0,56.5 1206.3,54.7 1208.7,58.7 1213.3,59.8 1212.9,64.5" fill="#ffffff" stroke="#666" stroke-width="1"/><circle cx="1202.0" cy="68.0" r="7.0" fill="#ffffff" stroke="#666" stroke-width="1.5"/><path d="M1769.4 105.2Q1717.7 128.7 1694.2 180.4Q1641.0 160.4 1587.8 180.4Q1564.3 128.7 1512.6 105.2Q1532.6 52.0 1512.6 -1.2Q1564.3 -24.7 1587.8 -76.4Q1641.0 -56.4 1694.2 -76.4Q1717.7 -24.7 1769.4 -1.2Q1749.4 52.0 1769.4 105.2Z" fill="#35215c"/>
<path d="M1795.4 78.2Q1743.7 101.7 1720.2 153.4Q1667.0 133.4 1613.8 153.4Q1590.3 101.7 1538.6 78.2Q1558.6 25.0 1538.6 -28.2Q1590.3 -51.7 1613.8 -103.4Q1667.0 -83.4 1720.2 -103.4Q1743.7 -51.7 1795.4 -28.2Q1775.4 25.0 1795.4 78.2Z" fill="#ffffff" stroke="#6a5a66" stroke-width="0.8"/>
<path d="M1775.6 70.0Q1735.2 93.2 1712.0 133.6Q1667.0 121.5 1622.0 133.6Q1598.8 93.2 1558.4 70.0Q1570.5 25.0 1558.4 -20.0Q1598.8 -43.2 1622.0 -83.6Q1667.0 -71.5 1712.0 -83.6Q1735.2 -43.2 1775.6 -20.0Q1763.5 25.0 1775.6 70.0Z" fill="#5fcaf7" stroke="#6a5a66" stroke-width="0.8"/>
<path d="M1756.6 62.1Q1725.6 83.6 1704.1 114.6Q1667.0 107.8 1629.9 114.6Q1608.4 83.6 1577.4 62.1Q1584.2 25.0 1577.4 -12.1Q1608.4 -33.6 1629.9 -64.6Q1667.0 -57.8 1704.1 -64.6Q1725.6 -33.6 1756.6 -12.1Q1749.8 25.0 1756.6 62.1Z" fill="#ffffff" stroke="#6a5a66" stroke-width="0.8"/>
<path d="M1739.1 54.8Q1715.5 73.5 1696.8 97.1Q1667.0 93.5 1637.2 97.1Q1618.5 73.5 1594.9 54.8Q1598.5 25.0 1594.9 -4.8Q1618.5 -23.5 1637.2 -47.1Q1667.0 -43.5 1696.8 -47.1Q1715.5 -23.5 1739.1 -4.8Q1735.5 25.0 1739.1 54.8Z" fill="#5fcaf7" stroke="#6a5a66" stroke-width="0.8"/>
<path d="M1722.4 48.0Q1705.1 63.1 1690.0 80.4Q1667.0 78.8 1644.0 80.4Q1628.9 63.1 1611.6 48.0Q1613.2 25.0 1611.6 2.0Q1628.9 -13.1 1644.0 -30.4Q1667.0 -28.8 1690.0 -30.4Q1705.1 -13.1 1722.4 2.0Q1720.8 25.0 1722.4 48.0Z" fill="#ffffff" stroke="#6a5a66" stroke-width="0.8"/>
<path d="M1705.8 41.1Q1694.0 52.0 1683.1 63.8Q1667.0 63.3 1650.9 63.8Q1640.0 52.0 1628.2 41.1Q1628.7 25.0 1628.2 8.9Q1640.0 -2.0 1650.9 -13.8Q1667.0 -13.3 1683.1 -13.8Q1694.0 -2.0 1705.8 8.9Q1705.3 25.0 1705.8 41.1Z" fill="#5fcaf7" stroke="#6a5a66" stroke-width="0.8"/>
<line x1="1667.0" y1="25.0" x2="1795.4" y2="78.2" stroke="#6a5a66" stroke-width="0.8"/>
<line x1="1667.0" y1="25.0" x2="1720.2" y2="153.4" stroke="#6a5a66" stroke-width="0.8"/>
<line x1="1667.0" y1="25.0" x2="1613.8" y2="153.4" stroke="#6a5a66" stroke-width="0.8"/>
<line x1="1667.0" y1="25.0" x2="1538.6" y2="78.2" stroke="#6a5a66" stroke-width="0.8"/>
<line x1="1667.0" y1="25.0" x2="1538.6" y2="-28.2" stroke="#6a5a66" stroke-width="0.8"/>
<line x1="1667.0" y1="25.0" x2="1613.8" y2="-103.4" stroke="#6a5a66" stroke-width="0.8"/>
<line x1="1667.0" y1="25.0" x2="1720.2" y2="-103.4" stroke="#6a5a66" stroke-width="0.8"/>
<line x1="1667.0" y1="25.0" x2="1795.4" y2="-28.2" stroke="#6a5a66" stroke-width="0.8"/><path d="M1335.4 555.2Q1283.7 578.7 1260.2 630.4Q1207.0 610.4 1153.8 630.4Q1130.3 578.7 1078.6 555.2Q1098.6 502.0 1078.6 448.8Q1130.3 425.3 1153.8 373.6Q1207.0 393.6 1260.2 373.6Q1283.7 425.3 1335.4 448.8Q1315.4 502.0 1335.4 555.2Z" fill="#35215c"/>
<path d="M1361.4 528.2Q1309.7 551.7 1286.2 603.4Q1233.0 583.4 1179.8 603.4Q1156.3 551.7 1104.6 528.2Q1124.6 475.0 1104.6 421.8Q1156.3 398.3 1179.8 346.6Q1233.0 366.6 1286.2 346.6Q1309.7 398.3 1361.4 421.8Q1341.4 475.0 1361.4 528.2Z" fill="#b5e886" stroke="#4f7a4a" stroke-width="0.8"/>
<path d="M1341.6 520.0Q1301.2 543.2 1278.0 583.6Q1233.0 571.5 1188.0 583.6Q1164.8 543.2 1124.4 520.0Q1136.5 475.0 1124.4 430.0Q1164.8 406.8 1188.0 366.4Q1233.0 378.5 1278.0 366.4Q1301.2 406.8 1341.6 430.0Q1329.5 475.0 1341.6 520.0Z" fill="#fddc6a" stroke="#4f7a4a" stroke-width="0.8"/>
<path d="M1322.6 512.1Q1291.6 533.6 1270.1 564.6Q1233.0 557.8 1195.9 564.6Q1174.4 533.6 1143.4 512.1Q1150.2 475.0 1143.4 437.9Q1174.4 416.4 1195.9 385.4Q1233.0 392.2 1270.1 385.4Q1291.6 416.4 1322.6 437.9Q1315.8 475.0 1322.6 512.1Z" fill="#b5e886" stroke="#4f7a4a" stroke-width="0.8"/>
<path d="M1305.1 504.8Q1281.5 523.5 1262.8 547.1Q1233.0 543.5 1203.2 547.1Q1184.5 523.5 1160.9 504.8Q1164.5 475.0 1160.9 445.2Q1184.5 426.5 1203.2 402.9Q1233.0 406.5 1262.8 402.9Q1281.5 426.5 1305.1 445.2Q1301.5 475.0 1305.1 504.8Z" fill="#fddc6a" stroke="#4f7a4a" stroke-width="0.8"/>
<path d="M1288.4 498.0Q1271.1 513.1 1256.0 530.4Q1233.0 528.8 1210.0 530.4Q1194.9 513.1 1177.6 498.0Q1179.2 475.0 1177.6 452.0Q1194.9 436.9 1210.0 419.6Q1233.0 421.2 1256.0 419.6Q1271.1 436.9 1288.4 452.0Q1286.8 475.0 1288.4 498.0Z" fill="#b5e886" stroke="#4f7a4a" stroke-width="0.8"/>
<path d="M1271.8 491.1Q1260.0 502.0 1249.1 513.8Q1233.0 513.3 1216.9 513.8Q1206.0 502.0 1194.2 491.1Q1194.7 475.0 1194.2 458.9Q1206.0 448.0 1216.9 436.2Q1233.0 436.7 1249.1 436.2Q1260.0 448.0 1271.8 458.9Q1271.3 475.0 1271.8 491.1Z" fill="#fddc6a" stroke="#4f7a4a" stroke-width="0.8"/>
<line x1="1233.0" y1="475.0" x2="1361.4" y2="528.2" stroke="#4f7a4a" stroke-width="0.8"/>
<line x1="1233.0" y1="475.0" x2="1286.2" y2="603.4" stroke="#4f7a4a" stroke-width="0.8"/>
<line x1="1233.0" y1="475.0" x2="1179.8" y2="603.4" stroke="#4f7a4a" stroke-width="0.8"/>
<line x1="1233.0" y1="475.0" x2="1104.6" y2="528.2" stroke="#4f7a4a" stroke-width="0.8"/>
<line x1="1233.0" y1="475.0" x2="1104.6" y2="421.8" stroke="#4f7a4a" stroke-width="0.8"/>
<line x1="1233.0" y1="475.0" x2="1179.8" y2="346.6" stroke="#4f7a4a" stroke-width="0.8"/>
<line x1="1233.0" y1="475.0" x2="1286.2" y2="346.6" stroke="#4f7a4a" stroke-width="0.8"/>
<line x1="1233.0" y1="475.0" x2="1361.4" y2="421.8" stroke="#4f7a4a" stroke-width="0.8"/><path d="M1841.4 538.2Q1789.7 561.7 1766.2 613.4Q1713.0 593.4 1659.8 613.4Q1636.3 561.7 1584.6 538.2Q1604.6 485.0 1584.6 431.8Q1636.3 408.3 1659.8 356.6Q1713.0 376.6 1766.2 356.6Q1789.7 408.3 1841.4 431.8Q1821.4 485.0 1841.4 538.2Z" fill="#35215c"/>
<path d="M1867.4 511.2Q1815.7 534.7 1792.2 586.4Q1739.0 566.4 1685.8 586.4Q1662.3 534.7 1610.6 511.2Q1630.6 458.0 1610.6 404.8Q1662.3 381.3 1685.8 329.6Q1739.0 349.6 1792.2 329.6Q1815.7 381.3 1867.4 404.8Q1847.4 458.0 1867.4 511.2Z" fill="#f59331" stroke="#8a3555" stroke-width="0.8"/>
<path d="M1847.6 503.0Q1807.2 526.2 1784.0 566.6Q1739.0 554.5 1694.0 566.6Q1670.8 526.2 1630.4 503.0Q1642.5 458.0 1630.4 413.0Q1670.8 389.8 1694.0 349.4Q1739.0 361.5 1784.0 349.4Q1807.2 389.8 1847.6 413.0Q1835.5 458.0 1847.6 503.0Z" fill="#ee3f6f" stroke="#8a3555" stroke-width="0.8"/>
<path d="M1828.6 495.1Q1797.6 516.6 1776.1 547.6Q1739.0 540.8 1701.9 547.6Q1680.4 516.6 1649.4 495.1Q1656.2 458.0 1649.4 420.9Q1680.4 399.4 1701.9 368.4Q1739.0 375.2 1776.1 368.4Q1797.6 399.4 1828.6 420.9Q1821.8 458.0 1828.6 495.1Z" fill="#f59331" stroke="#8a3555" stroke-width="0.8"/>
<path d="M1811.1 487.8Q1787.5 506.5 1768.8 530.1Q1739.0 526.5 1709.2 530.1Q1690.5 506.5 1666.9 487.8Q1670.5 458.0 1666.9 428.2Q1690.5 409.5 1709.2 385.9Q1739.0 389.5 1768.8 385.9Q1787.5 409.5 1811.1 428.2Q1807.5 458.0 1811.1 487.8Z" fill="#ee3f6f" stroke="#8a3555" stroke-width="0.8"/>
<path d="M1794.4 481.0Q1777.1 496.1 1762.0 513.4Q1739.0 511.8 1716.0 513.4Q1700.9 496.1 1683.6 481.0Q1685.2 458.0 1683.6 435.0Q1700.9 419.9 1716.0 402.6Q1739.0 404.2 1762.0 402.6Q1777.1 419.9 1794.4 435.0Q1792.8 458.0 1794.4 481.0Z" fill="#f59331" stroke="#8a3555" stroke-width="0.8"/>
<path d="M1777.8 474.1Q1766.0 485.0 1755.1 496.8Q1739.0 496.3 1722.9 496.8Q1712.0 485.0 1700.2 474.1Q1700.7 458.0 1700.2 441.9Q1712.0 431.0 1722.9 419.2Q1739.0 419.7 1755.1 419.2Q1766.0 431.0 1777.8 441.9Q1777.3 458.0 1777.8 474.1Z" fill="#ee3f6f" stroke="#8a3555" stroke-width="0.8"/>
<line x1="1739.0" y1="458.0" x2="1867.4" y2="511.2" stroke="#8a3555" stroke-width="0.8"/>
<line x1="1739.0" y1="458.0" x2="1792.2" y2="586.4" stroke="#8a3555" stroke-width="0.8"/>
<line x1="1739.0" y1="458.0" x2="1685.8" y2="586.4" stroke="#8a3555" stroke-width="0.8"/>
<line x1="1739.0" y1="458.0" x2="1610.6" y2="511.2" stroke="#8a3555" stroke-width="0.8"/>
<line x1="1739.0" y1="458.0" x2="1610.6" y2="404.8" stroke="#8a3555" stroke-width="0.8"/>
<line x1="1739.0" y1="458.0" x2="1685.8" y2="329.6" stroke="#8a3555" stroke-width="0.8"/>
<line x1="1739.0" y1="458.0" x2="1792.2" y2="329.6" stroke="#8a3555" stroke-width="0.8"/>
<line x1="1739.0" y1="458.0" x2="1867.4" y2="404.8" stroke="#8a3555" stroke-width="0.8"/>
<polygon points="1753.0,458.0 1749.9,461.5 1750.3,466.2 1745.7,467.3 1743.3,471.3 1739.0,469.5 1734.7,471.3 1732.3,467.3 1727.7,466.2 1728.1,461.5 1725.0,458.0 1728.1,454.5 1727.7,449.8 1732.3,448.7 1734.7,444.7 1739.0,446.5 1743.3,444.7 1745.7,448.7 1750.3,449.8 1749.9,454.5" fill="#4fc0f0" stroke="#2a80c0" stroke-width="1"/><circle cx="1739.0" cy="458.0" r="7.0" fill="#7ad6fa" stroke="#2a80c0" stroke-width="1.5"/></svg>
<div id="ctrl" class="abs"></div>
<div class="abs" style="left:1082px;top:459px;width:838px;height:2px;background:#0b0b0c"></div>
<div class="abs" style="left:1076px;top:456px;width:8px;height:8px;border-radius:4px;background:#4a8df8"></div>
<div class="t" style="left:1096px;top:472px;font-size:13px;font-weight:bold;color:#dcdcdc">00:00</div>
<div class="t" style="left:1144px;top:472px;font-size:13px;font-weight:bold;color:#dcdcdc">/</div>
<div class="t" style="left:1163px;top:472px;font-size:13px;font-weight:bold;color:#dcdcdc">00:31</div>
<svg class="abs" style="left:1400px;top:470px" width="160" height="20" viewBox="1400 470 160 20" fill="#f2f2f2">
<rect x="1405" y="475" width="2.400" height="10" rx=".6"/><path d="M1414.800 475.200v9.600l-7.400-4.800z" stroke="#f2f2f2" stroke-width=".8" stroke-linejoin="round"/>
<path d="M1440.500 475.400v9.200l-6.700-4.600zM1447 475.400v9.200l-6.700-4.600z" stroke="#f2f2f2" stroke-width=".8" stroke-linejoin="round"/>
<path d="M1475.600 473.200v13.600l12-6.800z" fill="#e2e2e2" stroke="#e2e2e2" stroke-width="1.400" stroke-linejoin="round"/>
<path d="M1515.400 475.400v9.200l6.700-4.600zM1521.800 475.400v9.200l6.700-4.600z" stroke="#f2f2f2" stroke-width=".8" stroke-linejoin="round"/>
<path d="M1547.200 475.200v9.600l7.400-4.800z" stroke="#f2f2f2" stroke-width=".8" stroke-linejoin="round"/><rect x="1554.400" y="475" width="2.400" height="10" rx=".6"/>
</svg>
<div class="abs" style="left:1766px;top:469px;width:46px;height:22px;border:1px solid #8e8e8e;border-radius:11px"></div>
<div class="t" style="left:1766px;top:475px;width:46px;text-align:center;font-size:12px;color:#e0e0e0">1x</div>
<div class="abs" style="left:1827px;top:469px;width:46px;height:22px;border:1px solid #8e8e8e;border-radius:11px"></div>
<div class="t" style="left:1827px;top:475px;width:46px;text-align:center;font-size:12px;color:#e0e0e0">16:9</div>
<svg class="abs" style="left:1882px;top:472px" width="16" height="16" viewBox="0 0 16 16" fill="none" stroke="#cfcfcf" stroke-width="1.600"><path d="M1.800 6V1.800H6M10 1.800h4.200V6M14.200 10v4.200H10M6 14.200H1.800V10"/><path d="M14 2L9.500 6.500M2 14l4.500-4.500"/></svg>

<!-- ===== toolbar ===== -->
<div id="toolbar" class="abs"></div>
<div id="tlline" class="abs"></div>
<svg class="abs" style="left:170px;top:511px" width="24" height="26" viewBox="0 0 24 26" fill="none" stroke="#aaaaaa" stroke-width="1.600" stroke-linecap="round" stroke-linejoin="round"><path d="M5.200 9.200A8 8 0 1 1 3.900 14"/><path d="M5.300 3.600v5.800h5.800"/></svg>
<svg class="abs" style="left:233px;top:511px" width="24" height="26" viewBox="0 0 24 26" fill="none" stroke="#2f2f31" stroke-width="1.600" stroke-linecap="round" stroke-linejoin="round"><path d="M18.800 9.200A8 8 0 1 0 20.100 14"/><path d="M18.700 3.600v5.800h-5.800"/></svg>
<svg class="abs" style="left:296px;top:514px" width="22" height="22" viewBox="0 0 22 22" fill="none" stroke="#2f2f31" stroke-width="1.600" stroke-linecap="round"><circle cx="16.500" cy="4.800" r="2.600"/><circle cx="16.500" cy="16.200" r="2.600"/><path d="M14.300 6.300L2 14.500M14.300 14.700L2 6.500"/></svg>
<svg class="abs" style="left:360px;top:512px" width="22" height="26" viewBox="0 0 22 26" fill="none" stroke="#aaaaaa" stroke-width="1.600" stroke-linecap="round" stroke-linejoin="round"><path d="M5 7H2v12h3M17 7h3v12h-3M2 13h18M11 2v22M8 4.800L11 2l3 2.800M8 21.200l3 2.800 3-2.800"/></svg>
<svg class="abs" style="left:423px;top:514px" width="22" height="22" viewBox="0 0 22 22" fill="none" stroke="#2a2a2c" stroke-width="1.600"><path d="M2.300 2v17.500M19.700 2v17.500"/><rect x="7" y="2.800" width="8" height="16" rx="2.500"/></svg>
<svg class="abs" style="left:485px;top:512px" width="24" height="26" viewBox="0 0 24 26" fill="none" stroke="#aaaaaa" stroke-width="1.600" stroke-linecap="round" stroke-linejoin="round"><path d="M7 2.800h10M1.800 7.200h20.400M4.200 7.200l1.900 14.600h11.800l1.900-14.600M9.800 12.500v5M14.200 12.500v5"/></svg>
<svg class="abs" style="left:548px;top:515px" width="24" height="20" viewBox="0 0 24 20" fill="none" stroke="#aaaaaa" stroke-width="1.700" stroke-linecap="round" stroke-linejoin="round"><path d="M7.500 17.200H3.800a2 2 0 0 1-2-2V4a2 2 0 0 1 2-2h16.400a2 2 0 0 1 2 2v11.200a2 2 0 0 1-2 2h-4"/><path d="M5.500 7.200h2M9.500 7.200h2M13.500 7.200h2M5.500 11.500h2M9.500 11.500h2M13.500 11.500h5V7.200" stroke-width="1.500" stroke-linecap="butt"/></svg>
<!-- zoom -->
<svg class="abs" style="left:1672px;top:514px" width="24" height="22" viewBox="1672 514 24 22" fill="none" stroke="#b4b4b4" stroke-width="1.600" stroke-linecap="round"><circle cx="1684" cy="524" r="7.600"/><path d="M1680.500 524h7M1678.500 529.600l-4 3.800"/></svg>
<div class="abs" style="left:1712px;top:524px;width:100px;height:2px;background:#c6c6c6;border-radius:1px"></div>
<div class="abs" style="left:1712px;top:524px;width:50px;height:2px;background:#4a8df8;border-radius:1px"></div>
<div class="abs" style="left:1757px;top:520px;width:10px;height:10px;background:#4a8df8;border-radius:5px"></div>
<svg class="abs" style="left:1828px;top:514px" width="24" height="22" viewBox="1828 514 24 22" fill="none" stroke="#b4b4b4" stroke-width="1.600" stroke-linecap="round"><circle cx="1840.300" cy="524" r="7.600"/><path d="M1836.800 524h7M1840.300 520.500v7M1834.800 529.600l-4 3.800"/></svg>
<svg class="abs" style="left:1878px;top:514px" width="22" height="22" viewBox="1878 514 22 22" fill="none" stroke="#b4b4b4" stroke-width="1.700"><path d="M1879.600 520.200h4.800v-4.800M1898.200 520.200h-4.800v-4.800M1879.600 529.400h4.800v4.600M1898.200 529.400h-4.800v4.600"/><circle cx="1888.800" cy="524.800" r="2.200" fill="#b4b4b4" stroke="none"/></svg>

<!-- ===== timeline ===== -->
<div id="tl" class="abs"></div>
<div class="t rl" style="left:339px;width:auto;text-align:left">00</div>
<div class="t rl" style="left:467px">00:20</div>
<div class="t rl" style="left:627px">00:40</div>
<div class="t rl" style="left:787px">01:00</div>
<div class="t rl" style="left:947px">01:20</div>
<div class="t rl" style="left:1107px">01:40</div>
<div class="t rl" style="left:1267px">02:00</div>
<div class="t rl" style="left:1427px">02:20</div>
<div class="t rl" style="left:1587px">02:40</div>
<div class="t rl" style="left:1747px">03:00</div>
<svg class="abs" style="left:338px;top:586px" width="1574" height="18" viewBox="338 586 1574 18"><path d="M354.5 595v6.500M370.5 595v6.500M386.5 595v6.500M402.5 595v6.500M418.5 595v6.500M434.5 595v6.500M450.5 595v6.500M466.5 595v6.500M482.5 595v6.500M514.5 595v6.500M530.5 595v6.500M546.5 595v6.500M562.5 595v6.500M578.5 595v6.500M594.5 595v6.500M610.5 595v6.500M626.5 595v6.500M642.5 595v6.500M674.5 595v6.500M690.5 595v6.500M706.5 595v6.500M722.5 595v6.500M738.5 595v6.500M754.5 595v6.500M770.5 595v6.500M786.5 595v6.500M802.5 595v6.500M834.5 595v6.500M850.5 595v6.500M866.5 595v6.500M882.5 595v6.500M898.5 595v6.500M914.5 595v6.500M930.5 595v6.500M946.5 595v6.500M962.5 595v6.500M994.5 595v6.500M1010.5 595v6.500M1026.5 595v6.500M1042.5 595v6.500M1058.5 595v6.500M1074.5 595v6.500M1090.5 595v6.500M1106.5 595v6.500M1122.5 595v6.500M1154.5 595v6.500M1170.5 595v6.500M1186.5 595v6.500M1202.5 595v6.500M1218.5 595v6.500M1234.5 595v6.500M1250.5 595v6.500M1266.5 595v6.500M1282.5 595v6.500M1314.5 595v6.500M1330.5 595v6.500M1346.5 595v6.500M1362.5 595v6.500M1378.5 595v6.500M1394.5 595v6.500M1410.5 595v6.500M1426.5 595v6.500M1442.5 595v6.500M1474.5 595v6.500M1490.5 595v6.500M1506.5 595v6.500M1522.5 595v6.500M1538.5 595v6.500M1554.5 595v6.500M1570.5 595v6.500M1586.5 595v6.500M1602.5 595v6.500M1634.5 595v6.500M1650.5 595v6.500M1666.5 595v6.500M1682.5 595v6.500M1698.5 595v6.500M1714.5 595v6.500M1730.5 595v6.500M1746.5 595v6.500M1762.5 595v6.500M1794.5 595v6.500M1810.5 595v6.500M1826.5 595v6.500M1842.5 595v6.500M1858.5 595v6.500M1874.5 595v6.500M1890.5 595v6.500M1906.5 595v6.500" stroke="#626264" stroke-width="1" fill="none"/><path d="M498.5 589v12.500M818.5 589v12.500M1138.5 589v12.500M1458.5 589v12.500M1778.5 589v12.500" stroke="#9c9c9c" stroke-width="1" fill="none"/><path d="M658.5 589v12.500M978.5 589v12.500M1298.5 589v12.500M1618.5 589v12.500" stroke="#f0f0f0" stroke-width="1" fill="none"/></svg>
<div class="abs" style="left:338px;top:732px;width:1574px;height:50px;background:#1c1d1f"></div>
<div class="abs" style="left:1912px;top:601px;width:8px;height:314px;background:#232325"></div>
<div class="abs" style="left:338px;top:915px;width:1574px;height:8px;background:#242426"></div>
<div class="abs" style="left:338px;top:915px;width:497px;height:8px;background:#bdbdbd;border-radius:0 4px 4px 0"></div>
<div class="abs" style="left:1912px;top:915px;width:8px;height:8px;background:#e8e8e8"></div>
<svg class="abs" style="left:164px;top:747px" width="20" height="20" viewBox="0 0 20 20"><rect x="1" y="1.500" width="18" height="17" rx="4" fill="#9a9a9a"/><g fill="#17181a"><rect x="5.300" y="1" width="1.600" height="4.300"/><rect x="12.600" y="1" width="1.600" height="4.300"/><rect x="5.300" y="14.700" width="1.600" height="4.300"/><rect x="12.600" y="14.700" width="1.600" height="4.300"/><rect x="0" y="4.600" width="20" height="1.300"/><rect x="0" y="14.100" width="20" height="1.300"/></g></svg>
<div class="abs" style="left:199px;top:744px;width:26px;height:25px;border-radius:5px;background:#0f0f10"></div>
<svg class="abs" style="left:203px;top:750px" width="18" height="14" viewBox="0 0 18 14"><path d="M1 7C3 3.500 5.800 1.800 9 1.800S15 3.500 17 7c-2 3.500-4.800 5.200-8 5.200S3 10.500 1 7z" fill="#b0b0b0"/><circle cx="9" cy="7" r="2.500" fill="#0f0f10"/></svg>
<div class="abs" style="left:239px;top:744px;width:82px;height:25px;border-radius:5px;background:#121213"></div>
<svg class="abs" style="left:247px;top:751px" width="16" height="13" viewBox="0 0 16 13"><path d="M1 4.300h2.600L7.200 1v11L3.600 8.700H1z" fill="#b4b4b4"/><path d="M9.200 4.200c1 1.300 1 3.300 0 4.600M11.300 2.300c2 2.400 2 6 0 8.400" fill="none" stroke="#b4b4b4" stroke-width="1.200" stroke-linecap="round"/></svg>
<div class="abs" style="left:268px;top:756px;width:45px;height:2px;background:#060606"></div>
<div class="abs" style="left:268px;top:756px;width:22px;height:2px;background:#bcbcbc"></div>
<div class="abs" style="left:287px;top:754px;width:7px;height:7px;border-radius:4px;background:#f4f4f4"></div>
<div class="abs" style="left:339px;top:732px;width:247px;height:50px;border-radius:4px;background:#4a8df8"></div>
<svg class="abs" style="left:341px;top:734px" width="244" height="46" viewBox="341 734 244 46">
<defs><clipPath id="clipc"><rect x="341" y="734" width="243.600" height="46" rx="2.500"/></clipPath><filter id="bc"><feGaussianBlur stdDeviation=".5"/></filter></defs>
<g clip-path="url(#clipc)">
<rect x="341" y="734" width="46" height="46" fill="#000"/>
<rect x="387" y="734" width="50.300" height="46" fill="#fff"/>
<rect x="437.300" y="734" width="148" height="46" fill="#5cc8f7"/>
<g filter="url(#bc)">
<path d="M425 734h12.300v18z" fill="#f7d66a"/><path d="M430 780h7.300v-14z" fill="#f7d66a"/>
<circle cx="412.200" cy="757" r="21.300" fill="#5cc4f5" stroke="#1a52dc" stroke-width="4.600"/>
<circle cx="412.200" cy="757" r="14" fill="none" stroke="#2f74e4" stroke-width="1.600" stroke-dasharray="4 3"/>
<circle cx="412.200" cy="757" r="9" fill="none" stroke="#3f8ae8" stroke-width="1" stroke-dasharray="3 3"/>
<circle cx="412.200" cy="757" r="3.600" fill="#1a52dc"/>
<path d="M437.300 768c6 3 12 6 18 8l-2 4h-16z" fill="#fff"/>
<path d="M487.300 734c-1 8-5 14-12 20 6-1 10-4 12-8zM487.300 762c-4 6-8 10-12 12 4 2 8 2 12 0z" fill="#fff"/>
<path d="M446 748l4-1 4 22 10 8-6 3-10-10z" fill="#f0a8a0"/><rect x="445.500" y="749" width="3.500" height="12" fill="#f2d26a" transform="rotate(-6 447 755)"/>
<path d="M454 780c2-6 8-8 14-6 4 1 6 3 7 6z" fill="#f3c744"/>
<circle cx="464" cy="770" r="4" fill="#e8a890"/><path d="M461 771h6l-3 4z" fill="#4a2a2a"/>
<path d="M487.300 734h50v11c-16-1-34 0-50 8z" fill="#fdd458"/>
<ellipse cx="508" cy="762" rx="22" ry="14" fill="#63ccf8"/>
<path d="M519 748c6-3 14-1 18.400 3v14c-6 1-14-1-16-6-2-3-3-7-2.400-11z" fill="#3a2460"/>
<path d="M519 772l11-2v10h-11zM533 766h4.400v14H533z" fill="#1a5ae0"/>
<rect x="549" y="757" width="6" height="4.500" fill="#d8c86a"/><rect x="555" y="755" width="5" height="6.500" fill="#e87a9a"/><rect x="560" y="756" width="6" height="5.500" fill="#f0d040"/><rect x="566" y="755" width="5" height="6.500" fill="#3a4ab0"/><rect x="571" y="756" width="5" height="5.500" fill="#2a3a90"/><circle cx="553" cy="754.500" r="1.400" fill="#fff"/><circle cx="557" cy="763" r="1.200" fill="#fff"/>
</g></g></svg>
<div class="abs" style="left:337px;top:560px;width:2px;height:363px;background:#ebebeb"></div>
<svg class="abs" style="left:333px;top:551px" width="10" height="16" viewBox="0 0 10 16"><path d="M1 0h8a1 1 0 0 1 1 1v11.500L5.600 15.600h-1.200L0 12.500V1a1 1 0 0 1 1-1z" fill="#e0e0e0"/></svg>
<div class="t" style="left:1401px;top:822px;font-size:60px;font-family:'Liberation Sans','Noto Sans CJK SC',sans-serif;color:#fff;font-weight:500;text-shadow:2px 2px 2px rgba(0,0,0,.75)">知乎</div>
<div class="t" style="left:1539px;top:824px;font-size:55px;font-family:'Liberation Sans','Noto Sans CJK SC',sans-serif;color:#fff;font-weight:500;text-shadow:2px 2px 2px rgba(0,0,0,.75)">@导演盒饭呢</div>
<div class="abs" style="left:18px;top:888px;width:215px;height:26px;background:#566074;border:1px solid #667085"></div>
<div class="abs" style="left:24px;top:891px;width:172px;height:20px;border-radius:5px;background:linear-gradient(#7a869a,#626c80);border:1px solid #3c4454"></div>
<svg class="abs" style="left:33px;top:893px" width="16" height="16" viewBox="0 0 16 16"><path d="M2 1.500L14 8 2 14.500z" fill="#2f9a3a" stroke="#1c5a24" stroke-width="1"/></svg>
<div class="t" style="left:51px;top:892px;font-size:15px;font-weight:bold;color:#1e2430;letter-spacing:.5px;font-family:'Liberation Sans','Noto Serif CJK SC',serif">从该页面下载 视频</div>
<div class="abs" style="left:200px;top:890px;width:15px;height:16px;border-radius:4px;background:#6f7a8e;border:1px solid #39404c"></div>
<div class="t" style="left:203.500px;top:892px;font-size:13px;font-weight:bold;color:#1e2430">?</div>
<div class="abs" style="left:216px;top:890px;width:15px;height:16px;border-radius:4px;background:#6f7a8e;border:1px solid #39404c"></div>
<div class="t" style="left:219px;top:892px;font-size:13px;font-weight:bold;color:#1e2430">X</div>
</body></html>
